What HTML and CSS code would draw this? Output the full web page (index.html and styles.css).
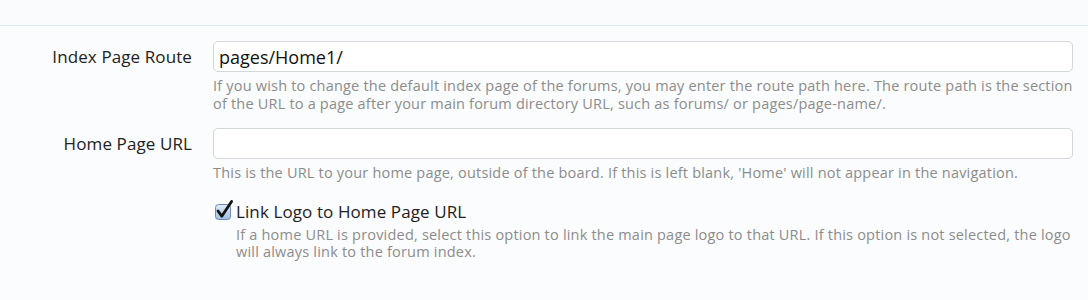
FILE: index.html
```html
<!DOCTYPE html>
<html>
<head>
<meta charset="utf-8">
<link rel="stylesheet" href="styles.css">
</head>
<body>
<div class="topbar"></div>
<form class="form">
  <div class="row">
    <label class="label" for="route">Index Page Route</label>
    <div class="control">
      <input id="route" class="text" type="text" value="pages/Home1/">
      <p class="explain">If you wish to change the default index page of the forums, you may enter the route path here. The route path is the section of the URL to a page after your main forum directory URL, such as forums/ or pages/page-name/.</p>
    </div>
  </div>
  <div class="row row2">
    <label class="label" for="home">Home Page URL</label>
    <div class="control">
      <input id="home" class="text" type="text" value="">
      <p class="explain">This is the URL to your home page, outside of the board. If this is left blank, 'Home' will not appear in the navigation.</p>
    </div>
  </div>
  <div class="row row3">
    <div class="label"></div>
    <div class="control">
      <div class="check">
        <svg class="box" width="20" height="22" viewBox="0 0 20 22">
          <defs>
            <linearGradient id="g" x1="0" y1="0" x2="0" y2="1">
              <stop offset="0" stop-color="#e3edf8"/>
              <stop offset="1" stop-color="#9fbde2"/>
            </linearGradient>
          </defs>
          <rect x="1.5" y="5.5" width="15" height="15" rx="3" fill="url(#g)" stroke="#6a8cb8" stroke-width="1"/>
          <path d="M4 12 L7.8 17.2 L17.6 2.4" fill="none" stroke="#141414" stroke-width="2.8" stroke-linecap="round" stroke-linejoin="round"/>
        </svg>
        <span class="checklabel">Link Logo to Home Page URL</span>
      </div>
      <p class="explain">If a home URL is provided, select this option to link the main page logo to that URL. If this option is not selected, the logo will always link to the forum index.</p>
    </div>
  </div>
</form>
</body>
</html>
```

FILE: styles.css
```css
html, body {
  margin: 0;
  padding: 0;
  background: #fbfcfe;
  font-family: "Open Sans", "DejaVu Sans", sans-serif;
}
.topbar {
  height: 25px;
  border-bottom: 1px solid #deeaf4;
  background: #fafbfd;
}
.form {
  padding-top: 15px;
}
.row {
  display: grid;
  grid-template-columns: 192px 860px;
  column-gap: 21px;
  align-items: start;
}
.row2 {
  margin-top: 16px;
}
.row3 {
  margin-top: 19px;
}
.label {
  text-align: right;
  font-size: 17px;
  letter-spacing: 0.1px;
  line-height: 30px;
  color: #222;
  padding-top: 1px;
}
.control {
  display: flex;
  flex-direction: column;
}
.text {
  box-sizing: border-box;
  width: 860px;
  height: 31px;
  margin: 0;
  padding: 0 5px;
  border: 1px solid #d3d6da;
  border-radius: 5px;
  background: #fff;
  font-family: inherit;
  font-size: 18px;
  color: #111;
  outline: none;
}
.explain {
  margin: 5px 0 0 0;
  font-size: 14.5px;
  letter-spacing: 0.2px;
  line-height: 17.5px;
  color: #8c8c8c;
}
.row2 .explain {
  margin-top: 5px;
}
.check {
  display: flex;
  align-items: center;
  gap: 2px;
  height: 22px;
  margin-left: 1px;
}
.box {
  display: block;
  flex: none;
  margin-top: -4px;
}
.checklabel {
  font-size: 17px;
  letter-spacing: 0.1px;
  line-height: 20px;
  color: #222;
}
.row3 .explain {
  margin-top: 3px;
  margin-left: 23px;
}
```
